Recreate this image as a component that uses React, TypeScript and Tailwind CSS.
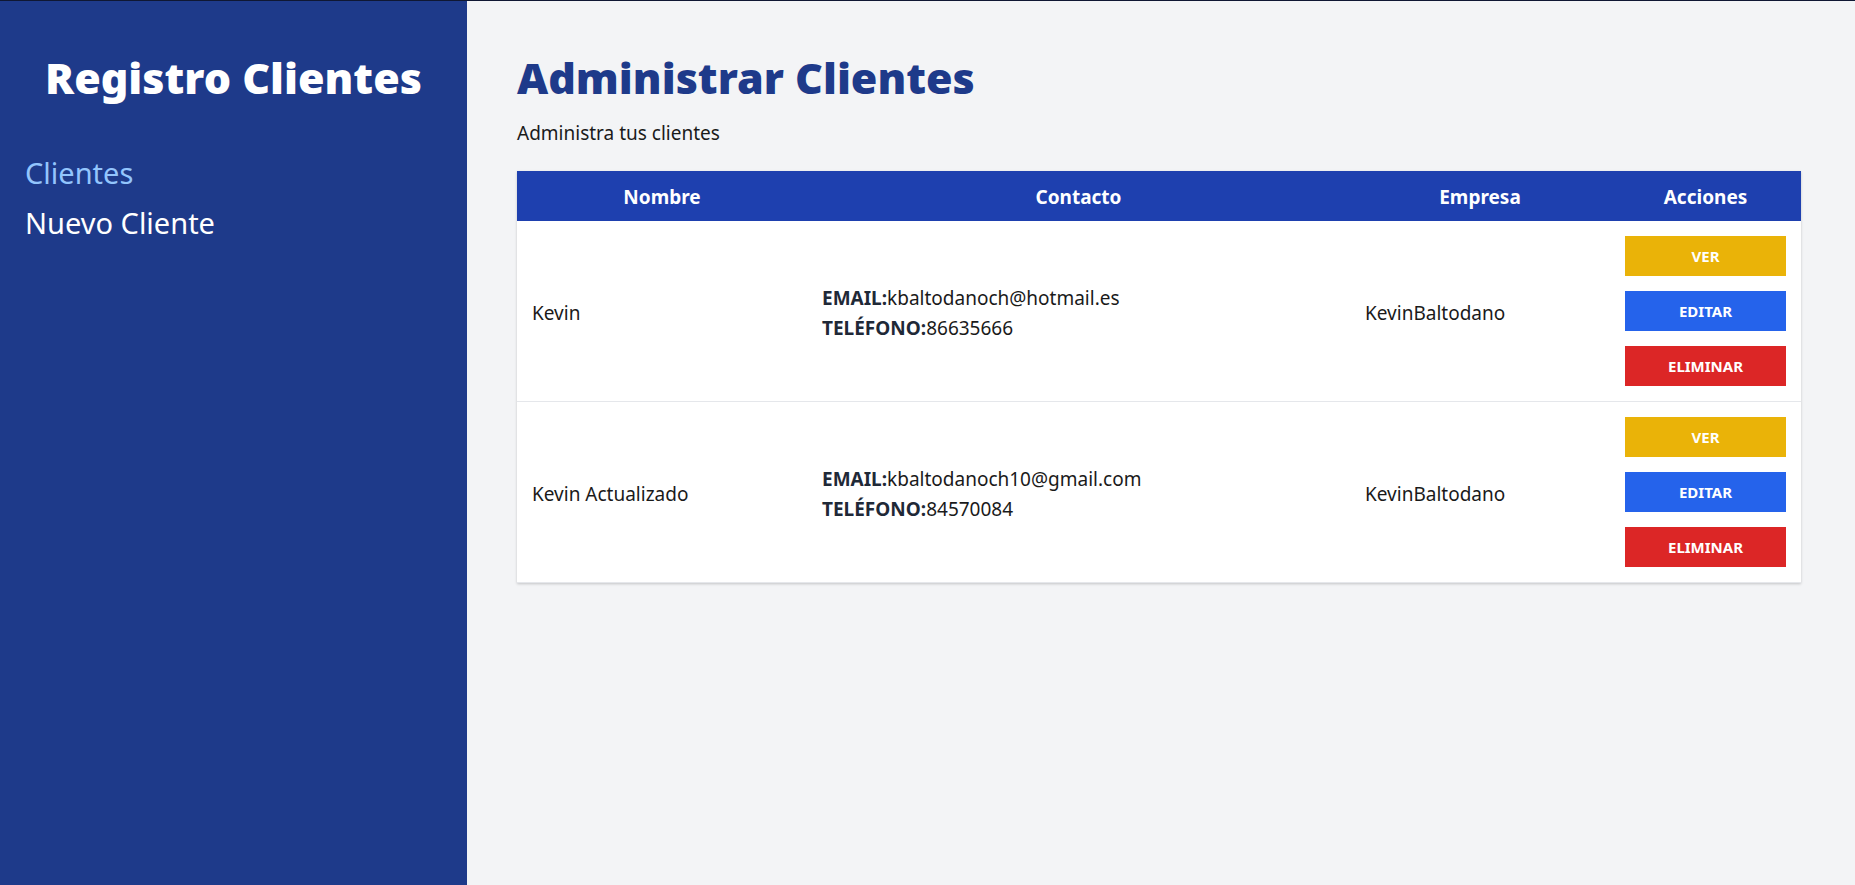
import React from "react";

type Cliente = {
  id: number;
  nombre: string;
  email: string;
  telefono: string;
  empresa: string;
};

const clientes: Cliente[] = [
  {
    id: 1,
    nombre: "Kevin",
    email: "kbaltodanoch@hotmail.es",
    telefono: "86635666",
    empresa: "KevinBaltodano",
  },
  {
    id: 2,
    nombre: "Kevin Actualizado",
    email: "kbaltodanoch10@gmail.com",
    telefono: "84570084",
    empresa: "KevinBaltodano",
  },
];

function ClienteRow({ cliente }: { cliente: Cliente }) {
  return (
    <tr className="border-b border-[#e5e7eb]">
      <td className="px-[15px] pb-[13px] pt-[17px] text-[19px] leading-[30px] text-[#1a1a1a]">
        {cliente.nombre}
      </td>
      <td className="px-[15px] pb-[13px] pt-[17px] text-[19px] leading-[30px] text-[#1a1a1a]">
        <p>
          <span className="font-bold text-[#1f2937]">EMAIL:</span>
          {cliente.email}
        </p>
        <p>
          <span className="font-bold text-[#1f2937]">TELÉFONO:</span>
          {cliente.telefono}
        </p>
      </td>
      <td className="px-[15px] pb-[13px] pt-[17px] text-[19px] leading-[30px] text-[#1a1a1a]">
        {cliente.empresa}
      </td>
      <td className="px-[15px] py-[15px]">
        <div className="flex flex-col gap-[15px]">
          <button
            type="button"
            className="block h-[40px] w-full bg-[#eab308] text-[15px] font-bold uppercase text-white"
          >
            Ver
          </button>
          <button
            type="button"
            className="block h-[40px] w-full bg-[#2563eb] text-[15px] font-bold uppercase text-white"
          >
            Editar
          </button>
          <button
            type="button"
            className="block h-[40px] w-full bg-[#dc2626] text-[15px] font-bold uppercase text-white"
          >
            Eliminar
          </button>
        </div>
      </td>
    </tr>
  );
}

export default function App() {
  return (
    <div
      className="flex min-h-[885px] border-t border-[#0f1733]"
      style={{ fontFamily: "'Noto Sans', 'Open Sans', sans-serif" }}
    >
      <aside className="w-[467px] shrink-0 bg-[#1e3a8a] px-[25px] pb-[50px] pt-[52px]">
        <h2 className="text-center text-[43px] font-black leading-[50px] text-white">
          Registro Clientes
        </h2>
        <nav className="mt-[50px]">
          <a href="#" className="block text-[29px] leading-[40px] text-[#93c5fd]">
            Clientes
          </a>
          <a href="#" className="mt-[10px] block text-[29px] leading-[40px] text-white">
            Nuevo Cliente
          </a>
        </nav>
      </aside>

      <main className="flex-1 bg-[#f3f4f6] pb-[50px] pl-[50px] pr-[54px] pt-[52px]">
        <h1 className="text-[43px] font-black leading-[50px] text-[#1e3a8a]">
          Administrar Clientes
        </h1>
        <p className="mt-[15px] text-[19px] leading-[30px] text-[#1a1a1a]">
          Administra tus clientes
        </p>

        <table className="mt-[23px] w-full table-fixed bg-white shadow-[0_1px_3px_rgba(0,0,0,0.12),0_1px_2px_rgba(0,0,0,0.08)]">
          <colgroup>
            <col className="w-[290px]" />
            <col className="w-[543px]" />
            <col className="w-[260px]" />
            <col className="w-[191px]" />
          </colgroup>
          <thead className="bg-[#1e40af] text-white">
            <tr>
              <th className="px-[10px] pb-[9px] pt-[11px] text-[19px] font-bold leading-[30px]">Nombre</th>
              <th className="px-[10px] pb-[9px] pt-[11px] text-[19px] font-bold leading-[30px]">Contacto</th>
              <th className="px-[10px] pb-[9px] pt-[11px] text-[19px] font-bold leading-[30px]">Empresa</th>
              <th className="px-[10px] pb-[9px] pt-[11px] text-[19px] font-bold leading-[30px]">Acciones</th>
            </tr>
          </thead>
          <tbody>
            {clientes.map((cliente) => (
              <ClienteRow key={cliente.id} cliente={cliente} />
            ))}
          </tbody>
        </table>
      </main>
    </div>
  );
}
